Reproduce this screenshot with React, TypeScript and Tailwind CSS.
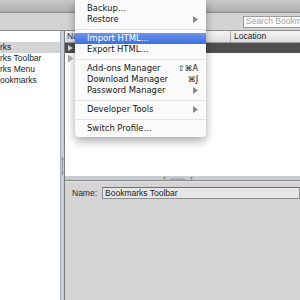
import React from "react";

function Arrow() {
  return (
    <svg width="5" height="7" viewBox="0 0 5 7" className="shrink-0">
      <path d="M0 0 L5 3.5 L0 7 Z" fill="#8a8a8a" />
    </svg>
  );
}

function Sep() {
  return <div className="mb-[3px] mt-[4px] h-px bg-[#e4e4e4]" />;
}

function Item({ label, keys, sub, active }: { label: string; keys?: string; sub?: boolean; active?: boolean }) {
  return (
    <div
      className={
        "flex h-[11px] items-center justify-between pl-[12px] pr-[8px] " +
        (active ? "bg-gradient-to-b from-[#6b94ee] to-[#3d6ee0] text-white" : "text-[#151515]")
      }
    >
      <span>{label}</span>
      {keys && <span className="text-[8px]">{keys}</span>}
      {sub && <Arrow />}
    </div>
  );
}

export default function App() {
  return (
    <div className="relative h-[300px] w-[300px] overflow-hidden bg-white font-['Liberation_Sans','DejaVu_Sans',sans-serif] text-[8.5px] text-[#1a1a1a]">
      <div className="h-[13px] border-b border-[#8e8e8e] bg-gradient-to-b from-[#c9c9c9] to-[#adadad]" />
      <div className="flex h-[18px] items-center justify-end border-b border-[#8a8a8a] bg-[#d3d3d3]">
        <div className="-mr-[20px] flex h-[12px] w-[77px] items-center overflow-hidden whitespace-nowrap border border-[#9a9a9a] bg-white pl-[2px] text-[#a0a0a0]">
          Search Bookmarks
        </div>
      </div>

      <div className="flex h-[269px]">
        {/* left tree */}
        <div className="w-[60px] overflow-hidden whitespace-nowrap bg-white pt-[11px]">
          <div className="flex h-[11px] items-center bg-[#d4d4d4]">rks</div>
          <div className="flex h-[11px] items-center">rks Toolbar</div>
          <div className="flex h-[11px] items-center">rks Menu</div>
          <div className="flex h-[11px] items-center">ookmarks</div>
        </div>

        {/* vertical splitter */}
        <div className="flex w-[5px] items-center justify-center border-l border-r border-l-[#a8b1ba] border-r-[#7d7d7d] bg-[#c7cfd7]">
          <svg width="3" height="18" viewBox="0 0 3 18">
            <path d="M1.5 0 V18" stroke="#8f98a2" strokeWidth="1" />
            <path d="M0 2 H3 M0 16 H3" stroke="#8f98a2" strokeWidth="1" />
          </svg>
        </div>

        {/* right side */}
        <div className="flex flex-1 flex-col">
          <div className="flex h-[12px] border-b border-[#9c9c9c] bg-gradient-to-b from-[#f5f5f5] to-[#dedede]">
            <div className="flex w-[166px] items-center border-r border-[#aaaaaa] pl-[2px]">Name</div>
            <div className="flex items-center pl-[3px]">Location</div>
          </div>
          <div className="flex h-[10px] items-center bg-[#4f4f4f] pl-[3px]">
            <svg width="5" height="6" viewBox="0 0 5 6">
              <path d="M0 0 L5 3 L0 6 Z" fill="#d8d8d8" />
            </svg>
          </div>
          <div className="flex h-[10px] items-center pl-[3px]">
            <svg width="5" height="7" viewBox="0 0 5 7">
              <path d="M0.5 0.5 L4.5 3.5 L0.5 6.5 Z" fill="#c4c4c4" stroke="#8c8c8c" strokeWidth="0.8" />
            </svg>
          </div>
          <div className="flex-1 bg-white" />

          {/* horizontal splitter */}
          <div className="flex h-[5px] items-center justify-center border-b border-[#878787] bg-[#c6ccd2] pr-[10px]">
            <svg width="30" height="3" viewBox="0 0 30 3">
              <path d="M0 0.5 H3 M1.5 0.5 V2.5 M27 0.5 H30 M28.5 0.5 V2.5" stroke="#8c959e" strokeWidth="1" />
              <path d="M7 2 H22" stroke="#8c959e" strokeWidth="1" />
            </svg>
          </div>

          {/* info pane */}
          <div className="flex-1 border-t border-[#e6e6e6] bg-[#d4d4d4] pt-[5px]">
            <div className="flex items-center gap-[5px] pl-[7px]">
              <span className="text-[#2a2a2a]">Name:</span>
              <div className="flex h-[12px] flex-1 items-center whitespace-nowrap border border-[#8f8f8f] border-t-[#6f6f6f] bg-[#e6e6e6] pl-[2px]">
                Bookmarks Toolbar
              </div>
            </div>
          </div>
        </div>
      </div>

      {/* Tools menu */}
      <div className="absolute left-[75px] top-0 w-[131px] rounded-b-[4px] bg-[#fbfbfb] pb-[3px] pt-[3px] font-['DejaVu_Sans',sans-serif] text-[8.4px] shadow-[0_4px_10px_rgba(0,0,0,0.35)]">
        <Item label="Backup…" />
        <Item label="Restore" sub />
        <Sep />
        <Item label="Import HTML…" active />
        <Item label="Export HTML…" />
        <Sep />
        <Item label="Add-ons Manager" keys="⇧⌘A" />
        <Item label="Download Manager" keys="⌘J" />
        <Item label="Password Manager" sub />
        <Sep />
        <Item label="Developer Tools" sub />
        <Sep />
        <Item label="Switch Profile…" />
      </div>
    </div>
  );
}
